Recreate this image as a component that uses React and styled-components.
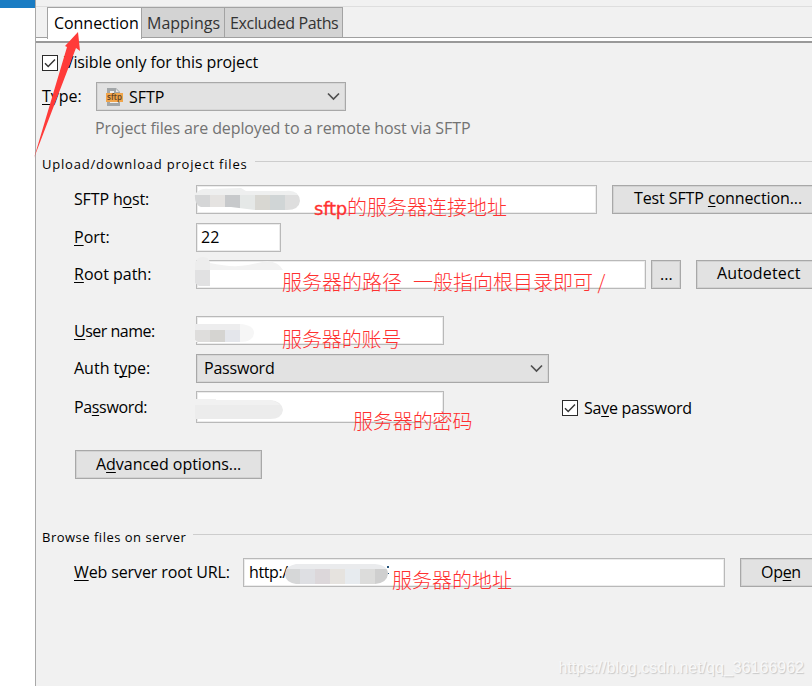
import React from 'react';
import styled, { createGlobalStyle } from 'styled-components';

const GlobalStyle = createGlobalStyle`
  * { box-sizing: border-box; }
  html, body { margin: 0; background: #fff; overflow: hidden; }
  body { font: 16px/20px "Open Sans", "Noto Sans CJK SC", sans-serif; color: #000; }
`;

const Page = styled.div`
  position: relative;
  display: flex;
  width: 812px;
  height: 686px;
  overflow: hidden;
`;

const SideStrip = styled.div`
  width: 35px;
  flex: none;
  background: linear-gradient(#1a7cc3 0 8px, #fff 8px);
`;

const Panel = styled.main`
  display: flex;
  flex-direction: column;
  flex: 1;
  min-width: 0;
  border-left: 1px solid #a8a8a8;
  background: #f1f1f1;
`;

const TabBar = styled.div`
  flex: none;
  display: flex;
  align-items: flex-start;
  height: 43px;
  padding: 7px 0 0 11px;
  background: linear-gradient(#f1f1f1 0 6px, #dedede 6px 7px, #f1f1f1 7px 37px, #a0a0a0 37px 38px, #fff 38px 41px, #999 41px 43px);
`;

const Tab = styled.div`
  width: ${(p) => p.$w}px;
  height: ${(p) => (p.$active ? 32 : 30)}px;
  padding-left: ${(p) => p.$pad}px;
  border: 1px solid #a3a3a3;
  border-bottom: 0;
  margin-right: -1px;
  background: ${(p) => (p.$active ? '#fff' : '#d3d3d3')};
  color: ${(p) => (p.$active ? '#000' : '#333')};
  line-height: 31px;
`;

const Row = styled.div`
  flex: none;
  display: flex;
  align-items: center;
  height: ${(p) => p.$h}px;
  margin-top: ${(p) => p.$mt || 0}px;
  padding-left: ${(p) => p.$pl || 0}px;
`;

const Text = styled.span`
  letter-spacing: ${(p) => p.$ls || 0}px;
  padding-bottom: ${(p) => p.$up || 0}px;
  white-space: pre;
  color: ${(p) => p.$color || 'inherit'};
`;

const Label = styled(Text)`
  flex: none;
  width: ${(p) => p.$w || 122}px;
`;

const Key = styled.span`
  text-decoration: underline;
  text-decoration-thickness: 1px;
  text-underline-offset: 2px;
  text-decoration-skip-ink: none;
`;

const Field = styled.div`
  position: relative;
  flex: none;
  display: flex;
  align-items: center;
  width: ${(p) => p.$w}px;
  height: 100%;
  padding-left: ${(p) => p.$pad ?? 5}px;
  border: 1px solid #b9b9b9;
  box-shadow: inset 0 0 0 1px #ececec;
  background: #fff;
`;

const Select = styled(Field)`
  padding: 0 5px 0 7px;
  border-color: #a8a8a8;
  box-shadow: inset 0 0 0 1px #d6d6d6;
  background: #e2e2e2;
`;

const Button = styled.div`
  flex: none;
  display: flex;
  align-items: center;
  width: ${(p) => p.$w}px;
  height: 29px;
  margin-left: ${(p) => p.$ml || 0}px;
  padding: 0 0 ${(p) => p.$up || 0}px ${(p) => p.$pad}px;
  border: 1px solid #a8a8a8;
  box-shadow: inset 0 0 0 1px #d2d2d2;
  background: #e2e2e2;
`;

const CheckSquare = styled.svg`
  flex: none;
  width: 16px;
  height: 16px;
  margin-right: 6px;
`;

const Chevron = styled.svg`
  width: 13px;
  height: 9px;
  margin-left: auto;
`;

const FileIcon = styled.svg`
  width: 18px;
  height: 20px;
  margin: 0 6px 0 1px;
`;

const SectionTitle = styled.div`
  flex: none;
  display: flex;
  align-items: center;
  gap: ${(p) => p.$gap}px;
  height: 18px;
  margin-top: ${(p) => p.$mt}px;
  padding-left: 6px;
  font-size: 13px;
  line-height: 18px;
`;

const Rule = styled.div`
  flex: 1;
  height: 1px;
  margin-bottom: 5px;
  background: #cdcdcd;
`;

const Note = styled.span`
  position: absolute;
  z-index: 2;
  left: ${(p) => p.$x}px;
  top: ${(p) => p.$y}px;
  color: #ff3030;
  font: 300 20px/24px "Noto Sans CJK SC", sans-serif;
  letter-spacing: ${(p) => p.$ls ?? -0.1}px;
  white-space: pre;
`;

const Latin = styled.span`
  font: 400 18px "DejaVu Sans", sans-serif;
  letter-spacing: -0.2px;
  -webkit-text-stroke: 0.3px #ff3030;
`;

const Smudge = styled.svg`
  position: absolute;
  z-index: 1;
  left: -3px;
  top: ${(p) => p.$y}px;
`;

const UrlSmudge = styled(Smudge)`
  left: 40px;
`;

const Arrow = styled.svg`
  position: absolute;
  left: 33px;
  top: 30px;
`;

const Watermark = styled.div`
  position: absolute;
  right: 8px;
  bottom: 8px;
  color: #f8f8f8;
  font: 16px/20px "Liberation Sans", sans-serif;
  text-shadow: 1px 1px 1px #c8c8c8;
`;

function Checkbox() {
  return (
    <CheckSquare viewBox="0 0 16 16">
      <rect x=".5" y=".5" width="15" height="15" fill="#fff" stroke="#2b2b2b" />
      <path d="M3 8.2 6.2 11.5 13 4.4" fill="none" stroke="#333" strokeWidth="1.4" />
    </CheckSquare>
  );
}

function DropArrow() {
  return (
    <Chevron viewBox="0 0 13 9">
      <path d="M1 1.5 6.5 7 12 1.5" fill="none" stroke="#505050" strokeWidth="1.7" />
    </Chevron>
  );
}

function SftpIcon() {
  return (
    <FileIcon viewBox="0 0 18 20">
      <path d="M2 1H11L15 5V19H2Z" fill="#a2a6a8" />
      <path d="M5 4H9V7H13V16H5Z" fill="#eeeeee" />
      <path d="M11 2V5H14Z" fill="#e6e6e6" />
      <rect x="1" y="6" width="17" height="9" fill="#f0a54b" />
      <text x="9.500" y="13" textAnchor="middle" fontFamily="Open Sans, sans-serif" fontSize="8" fontWeight="600" fill="#5c4327">sftp</text>
    </FileIcon>
  );
}

export default function App() {
  return (
    <Page>
      <GlobalStyle />
      <SideStrip />
      <Panel>
        <TabBar>
          <Tab $active $w={95} $pad={6}><Text $ls={-0.05}>Connection</Text></Tab>
          <Tab $w={84} $pad={5}><Text>Mappings</Text></Tab>
          <Tab $w={119} $pad={5}><Text $ls={-0.34}>Excluded Paths</Text></Tab>
        </TabBar>

        <Row $h={20} $mt={10} $pl={6}>
          <Checkbox />
          <Text $ls={-0.11} $up={2}>Visible only for this project</Text>
        </Row>
        <Row $h={29} $mt={9} $pl={6}>
          <Label $w={54} $up={1}><Key>T</Key>ype:</Label>
          <Select $w={250}>
            <SftpIcon />
            <Text>SFTP</Text>
            <DropArrow />
          </Select>
        </Row>
        <Row $h={20} $mt={7} $pl={59}>
          <Text $ls={-0.11} $color="#737373">Project files are deployed to a remote host via SFTP</Text>
        </Row>

        <SectionTitle $mt={17} $gap={7}>
          <Text $ls={0.8}>Upload/download project files</Text>
          <Rule />
        </SectionTitle>

        <Row $h={29} $mt={12} $pl={38}>
          <Label $ls={-0.15} $up={2}>SFTP h<Key>o</Key>st:</Label>
          <Field $w={401}>
            <Smudge $y={1} width="106" height="25" viewBox="0 0 106 25">
              <clipPath id="host"><path d="M1 7Q6 1 15 2L47 1 52 4 91 4Q105 2 106 14Q105 23 93 23L61 23 37 20 7 20Q0 18 1 7Z" /></clipPath>
              <g clipPath="url(#host)">
                <path fill="#eeefef" d="M0 0H106V8H0Z" />
                <path fill="#d5d6d7" d="M0 8H16V25H0Z" />
                <path fill="#e5e3e1" d="M16 8H31V25H16Z" />
                <path fill="#c7c9cb" d="M31 8H46V25H31Z" />
                <path fill="#e5e8e7" d="M46 8H61V25H46Z" />
                <path fill="#d8d7d2" d="M61 8H76V25H61Z" />
                <path fill="#d0d5d6" d="M76 8H91V25H76Z" />
                <path fill="#dedede" d="M91 8H106V25H91Z" />
              </g>
            </Smudge>
            <Note $x={117} $y={9} $ls={0}><Latin>sftp</Latin>的服务器连接地址</Note>
          </Field>
          <Button $w={210} $ml={15} $pad={21} $up={3}><Text $ls={-0.1}>Test SFTP <Key>c</Key>onnection...</Text></Button>
        </Row>
        <Row $h={29} $mt={9} $pl={38}>
          <Label $up={2}><Key>P</Key>ort:</Label>
          <Field $w={85} $pad={4}><Text $up={1}>22</Text></Field>
        </Row>
        <Row $h={29} $mt={8} $pl={38}>
          <Label $up={2}><Key>R</Key>oot path:</Label>
          <Field $w={450}>
            <Smudge $y={-5} width="92" height="31" viewBox="0 0 92 31">
              <path d="M1 14V7Q3 1 9 1Q15 1 16 7V14Z" fill="#ededed" />
              <path d="M16 6H68L54 9Q38 12 16 7Z" fill="#fff" />
              <path d="M16 7Q38 12 54 9L73 5Q85 6 89 14H16Z" fill="#f2f2f2" />
              <path d="M1 14H16V30H5L1 27Z" fill="#e1e1e2" />
            </Smudge>
            <Note $x={85} $y={9} $ls={0}>服务器的路径</Note>
            <Note $x={216} $y={9} $ls={0}>一般指向根目录即可 /</Note>
          </Field>
          <Button $w={30} $ml={5} $pad={8} $up={2}>...</Button>
          <Button $w={130} $ml={15} $pad={20} $up={3}><Text $ls={0.15}>Autodetect</Text></Button>
        </Row>
        <Row $h={29} $mt={27} $pl={38}>
          <Label $ls={-0.5}><Key>U</Key>ser name:</Label>
          <Field $w={248}>
            <Smudge $y={4} width="60" height="23" viewBox="0 0 60 23">
              <path d="M1 3H46Q60 4 60 12Q59 21 46 21H1Z" fill="#f6f6f6" />
              <path d="M1 3H46V9H1Z" fill="#ededee" />
              <path d="M1 9H16V21H4L1 19Z" fill="#dedddc" />
              <path d="M16 9H31V21H16Z" fill="#d5d4d1" />
              <path d="M31 9H46V21H31Z" fill="#e4e6eb" />
            </Smudge>
            <Note $x={85} $y={10}>服务器的账号</Note>
          </Field>
        </Row>
        <Row $h={29} $mt={9} $pl={38}>
          <Label $up={1}>Auth t<Key>y</Key>pe:</Label>
          <Select $w={353}><Text $ls={-0.2} $up={1}>Password</Text><DropArrow /></Select>
        </Row>
        <Row $h={32} $mt={8} $pl={38}>
          <Label $ls={-0.35}>Pa<Key>s</Key>sword:</Label>
          <Field $w={248}>
            <Smudge $y={4} width="90" height="25" viewBox="0 0 90 25">
              <path d="M1 3H22V4H76Q88 5 89 14Q88 23 76 23H1Z" fill="#ececec" />
              <path d="M1 3H22V4H76Q82 5 86 9H1Z" fill="#f1f1f1" />
            </Smudge>
            <Note $x={156} $y={17}>服务器的密码</Note>
          </Field>
          <Row $h={30} $mt={2} $pl={118}>
            <Checkbox />
            <Text $ls={-0.25} $up={1}>Sa<Key>v</Key>e password</Text>
          </Row>
        </Row>
        <Row $h={29} $mt={27} $pl={39}>
          <Button $w={187} $pad={20} $up={2}><Text $ls={-0.04}>A<Key>d</Key>vanced options...</Text></Button>
        </Row>

        <SectionTitle $mt={49} $gap={7}>
          <Text $ls={0.5}>Browse files on server</Text>
          <Rule />
        </SectionTitle>
        <Row $h={29} $mt={12} $pl={38}>
          <Label $w={169} $ls={-0.12} $up={1}><Key>W</Key>eb server root URL:</Label>
          <Field $w={482}>
            <Text $ls={-0.4} $up={1}>http:/</Text>
            <UrlSmudge $y={3} width="106" height="24" viewBox="0 0 106 24">
              <clipPath id="url"><path d="M12 2H91Q104 3 104 12Q103 21 91 22H12Q1 20 1 12Q1 4 12 2Z" /></clipPath>
              <g clipPath="url(#url)">
                <path fill="#eaebed" d="M0 0H106V7H0Z" />
                <path fill="#d6d7d8" d="M0 7H16V24H0Z" />
                <path fill="#dedfe3" d="M16 7H31V24H16Z" />
                <path fill="#dcd7da" d="M31 7H46V24H31Z" />
                <path fill="#e6e3df" d="M46 7H61V24H46Z" />
                <path fill="#e7ebef" d="M61 7H76V24H61Z" />
                <path fill="#dcdcdb" d="M76 7H91V24H76Z" />
                <path fill="#cfcfcf" d="M91 7H106V24H91Z" />
              </g>
              <path fill="#26547b" d="M103 4H105V6H103ZM104 11H105V12H104Z" />
            </UrlSmudge>
            <Note $x={148} $y={9} $ls={0}>服务器的地址</Note>
          </Field>
          <Button $w={90} $ml={15} $pad={20} $up={1}><Text $ls={-0.3}>Op<Key>e</Key>n</Text></Button>
        </Row>
      </Panel>
      <Arrow width="50" height="130" viewBox="0 0 50 130">
        <path d="M45 2 47 21 43 18 1 128 34 17 32 16Z" fill="#ff3b39" />
      </Arrow>
      <Watermark>https://blog.csdn.net/qq_36166962</Watermark>
    </Page>
  );
}
